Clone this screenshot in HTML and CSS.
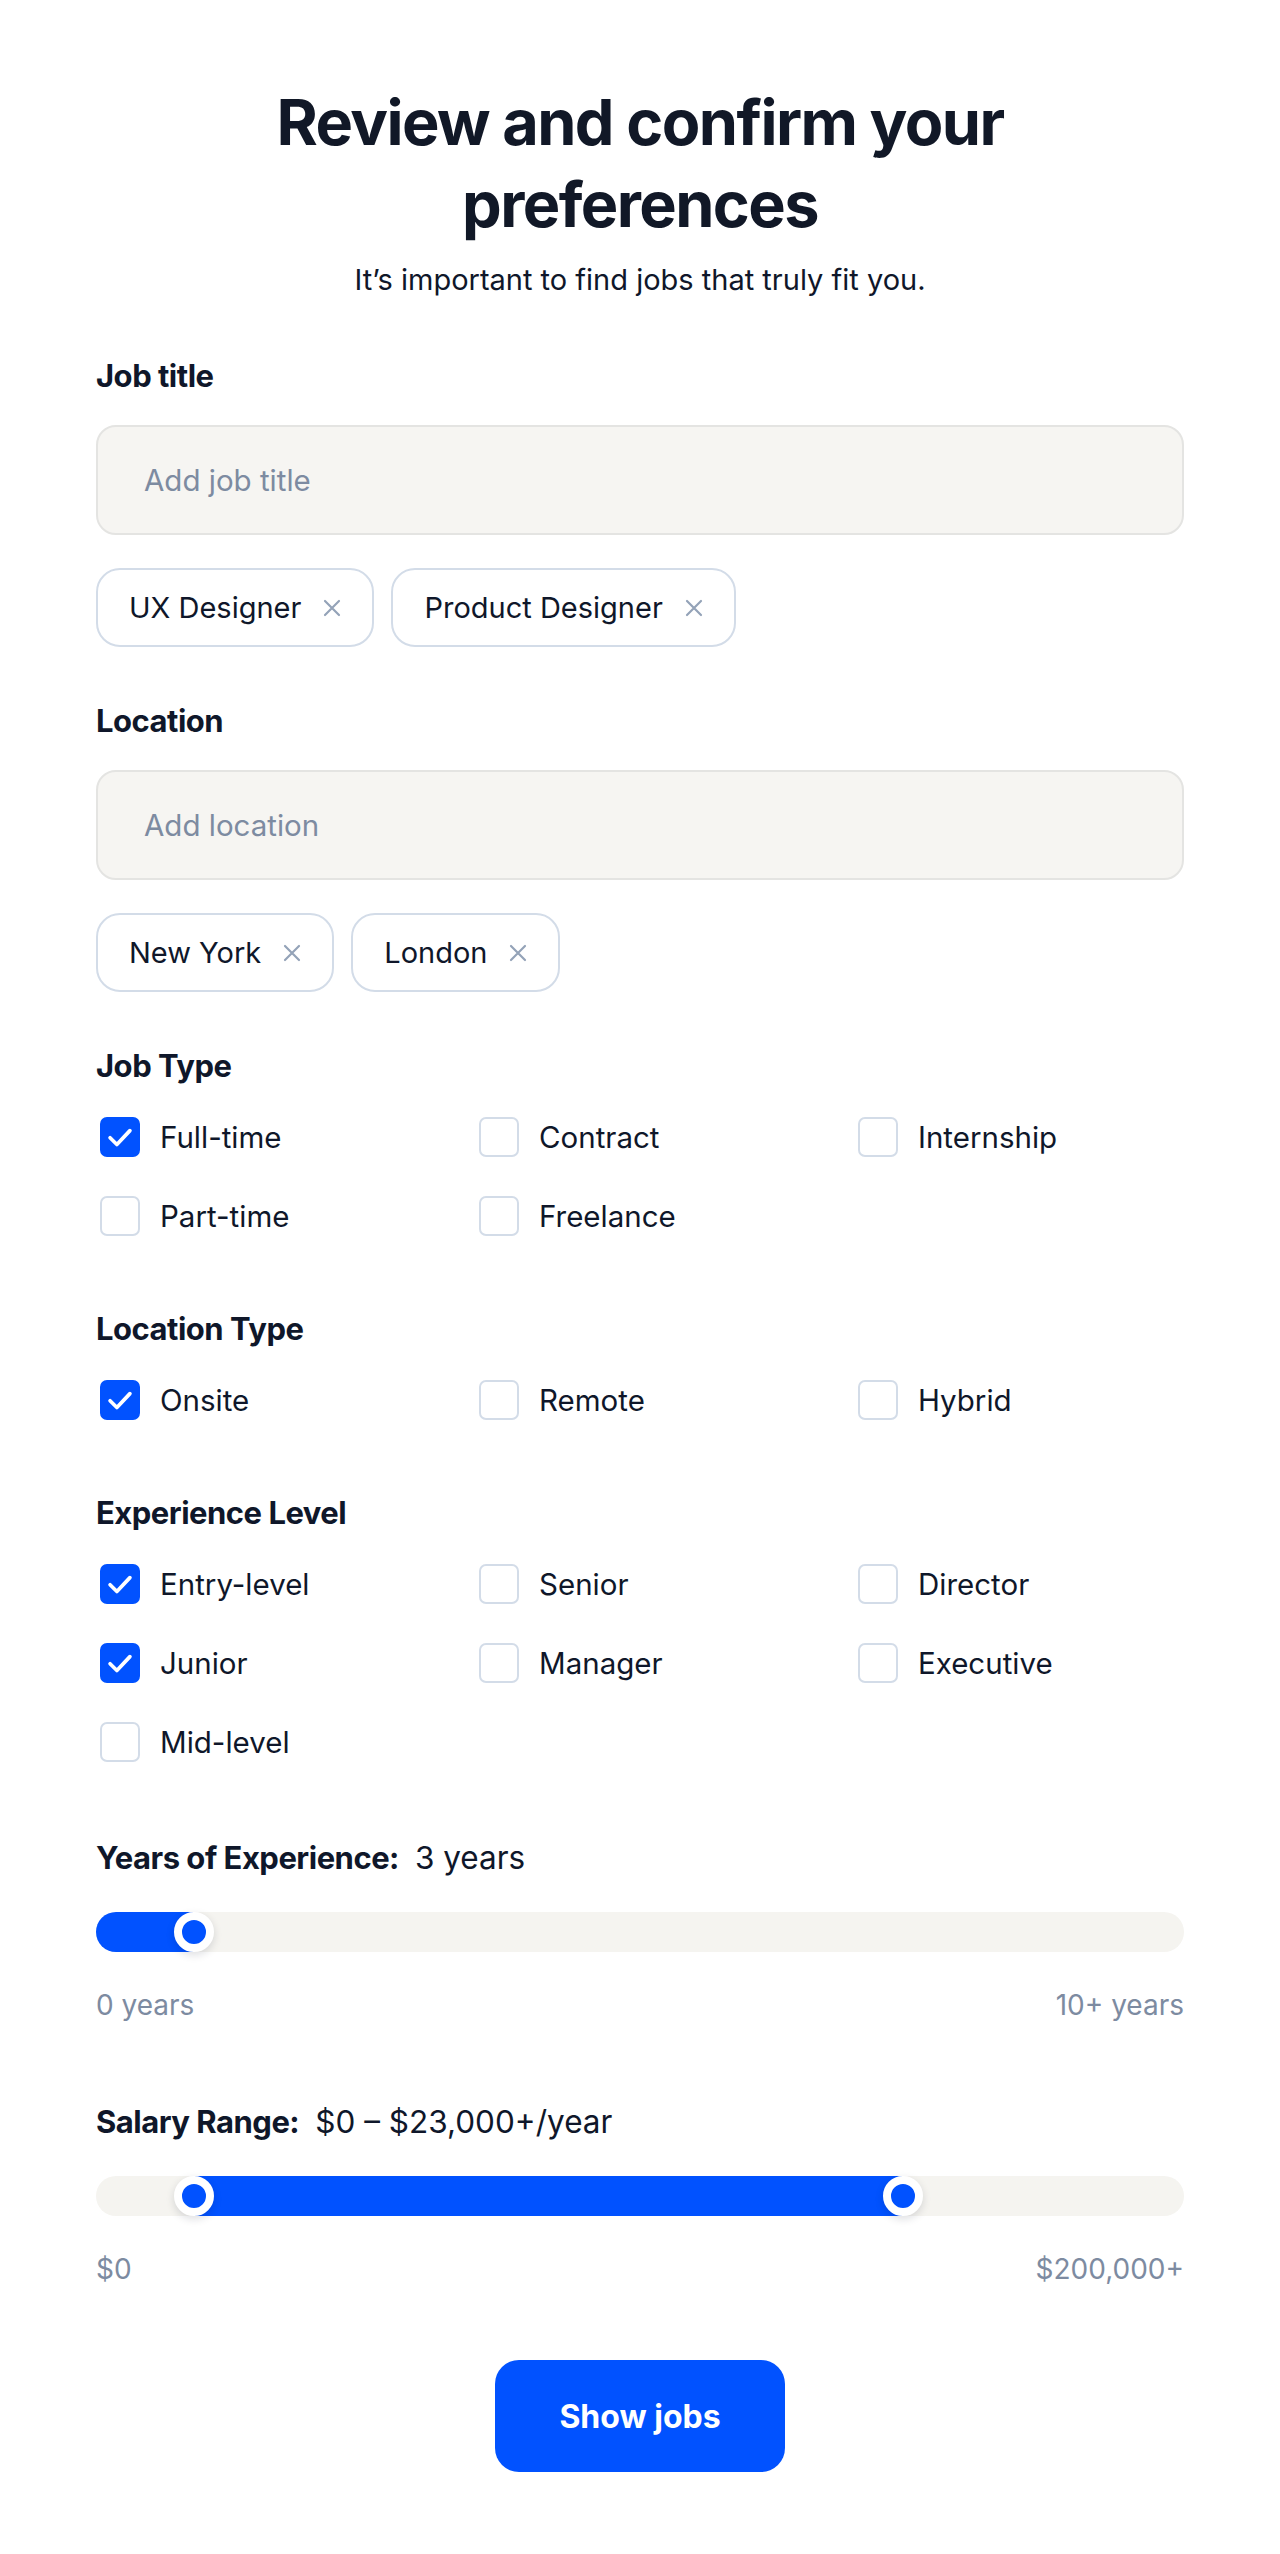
FILE: index.html
```html
<!DOCTYPE html>
<html lang="en">
<head>
<meta charset="utf-8">
<title>Review and confirm your preferences</title>
<link rel="stylesheet" href="styles.css">
</head>
<body>
<main class="page">
  <h1 class="title">Review and confirm your preferences</h1>
  <p class="subtitle">It’s important to find jobs that truly fit you.</p>

  <section class="section section--first">
    <h2 class="label">Job title</h2>
    <div class="input">Add job title</div>
    <div class="chips">
      <span class="chip">UX Designer<svg class="chip-x" viewBox="0 0 20 20"><path d="M3 3L17 17M17 3L3 17"/></svg></span>
      <span class="chip">Product Designer<svg class="chip-x" viewBox="0 0 20 20"><path d="M3 3L17 17M17 3L3 17"/></svg></span>
    </div>
  </section>

  <section class="section section--text">
    <h2 class="label">Location</h2>
    <div class="input">Add location</div>
    <div class="chips">
      <span class="chip">New York<svg class="chip-x" viewBox="0 0 20 20"><path d="M3 3L17 17M17 3L3 17"/></svg></span>
      <span class="chip">London<svg class="chip-x" viewBox="0 0 20 20"><path d="M3 3L17 17M17 3L3 17"/></svg></span>
    </div>
  </section>

  <section class="section section--text">
    <h2 class="label">Job Type</h2>
    <div class="options">
      <div class="option"><span class="box box--on"><svg viewBox="0 0 24 24"><path d="M5 12.5l4.8 4.8L19 7.5"/></svg></span>Full-time</div>
      <div class="option"><span class="box"></span>Contract</div>
      <div class="option"><span class="box"></span>Internship</div>
      <div class="option"><span class="box"></span>Part-time</div>
      <div class="option"><span class="box"></span>Freelance</div>
    </div>
  </section>

  <section class="section section--options">
    <h2 class="label">Location Type</h2>
    <div class="options">
      <div class="option"><span class="box box--on"><svg viewBox="0 0 24 24"><path d="M5 12.5l4.8 4.8L19 7.5"/></svg></span>Onsite</div>
      <div class="option"><span class="box"></span>Remote</div>
      <div class="option"><span class="box"></span>Hybrid</div>
    </div>
  </section>

  <section class="section section--options">
    <h2 class="label">Experience Level</h2>
    <div class="options">
      <div class="option"><span class="box box--on"><svg viewBox="0 0 24 24"><path d="M5 12.5l4.8 4.8L19 7.5"/></svg></span>Entry-level</div>
      <div class="option"><span class="box"></span>Senior</div>
      <div class="option"><span class="box"></span>Director</div>
      <div class="option"><span class="box box--on"><svg viewBox="0 0 24 24"><path d="M5 12.5l4.8 4.8L19 7.5"/></svg></span>Junior</div>
      <div class="option"><span class="box"></span>Manager</div>
      <div class="option"><span class="box"></span>Executive</div>
      <div class="option"><span class="box"></span>Mid-level</div>
    </div>
  </section>

  <section class="section section--years">
    <h2 class="label">Years of Experience:<span class="value">3 years</span></h2>
    <div class="track">
      <div class="fill fill--start" style="left:0;width:98px"></div>
      <span class="thumb" style="left:78px"></span>
    </div>
    <div class="scale"><span>0 years</span><span>10+ years</span></div>
  </section>

  <section class="section section--slider">
    <h2 class="label">Salary Range:<span class="value">$0 – $23,000+/year</span></h2>
    <div class="track">
      <div class="fill" style="left:98px;width:708px"></div>
      <span class="thumb" style="left:78px"></span>
      <span class="thumb" style="left:787px"></span>
    </div>
    <div class="scale"><span>$0</span><span>$200,000+</span></div>
  </section>

  <div class="actions">
    <button class="button" type="button">Show jobs</button>
  </div>
</main>
</body>
</html>
```

FILE: styles.css
```css
* { box-sizing: border-box; }

html, body {
  margin: 0;
  padding: 0;
  background: #ffffff;
}

body {
  font-family: Inter, "Noto Sans", "Liberation Sans", sans-serif;
  color: #0f172a;
}

.page {
  width: 1088px;
  margin: 0 auto;
  padding: 81px 0 82px;
}

.title {
  margin: 0 auto;
  max-width: 820px;
  font-size: 63px;
  line-height: 82px;
  font-weight: 700;
  letter-spacing: -1.6px;
  text-align: center;
  color: #111827;
}

.subtitle {
  margin: 17px 0 0;
  font-size: 29px;
  line-height: 36px;
  text-align: center;
  color: #0f172a;
}

.section--first { margin-top: 60px; }
.section--text { margin-top: 56px; }
.section--options { margin-top: 75px; }
.section--years { margin-top: 78px; }
.section--slider { margin-top: 83px; }

.label {
  margin: 0;
  font-size: 31px;
  line-height: 36px;
  font-weight: 700;
  letter-spacing: -0.5px;
  color: #0f172a;
}

.value {
  margin-left: 16px;
  font-size: 31.5px;
  font-weight: 400;
  letter-spacing: 0;
}

.input {
  margin-top: 31px;
  height: 110px;
  padding: 0 46px;
  display: flex;
  align-items: center;
  background: #f6f5f2;
  border: 2px solid #e4e4e2;
  border-radius: 20px;
  font-size: 29.5px;
  color: #7d8ba1;
}

.chips {
  margin-top: 33px;
  display: flex;
  gap: 17px;
}

.chip {
  height: 79px;
  padding: 0 30px 0 31px;
  display: inline-flex;
  align-items: center;
  gap: 21px;
  border: 2px solid #d3dce8;
  border-radius: 24px;
  font-size: 29px;
  color: #0f172a;
  background: #fff;
}

.chip-x {
  width: 20px;
  height: 20px;
  fill: none;
  stroke: #94a3b8;
  stroke-width: 2.2;
  stroke-linecap: round;
}

.options {
  margin-top: 33px;
  display: grid;
  grid-template-columns: repeat(3, 1fr);
  column-gap: 49px;
  row-gap: 39px;
}

.option {
  height: 40px;
  padding-left: 4px;
  display: flex;
  align-items: center;
  gap: 20px;
  font-size: 29.5px;
  color: #0f172a;
}

.box {
  flex: none;
  width: 40px;
  height: 40px;
  border: 2px solid #d3dce8;
  border-radius: 7px;
  background: #fff;
  display: flex;
  align-items: center;
  justify-content: center;
}

.box--on {
  background: #0152ff;
  border-color: #0152ff;
}

.box svg {
  width: 34px;
  height: 34px;
  fill: none;
  stroke: #fff;
  stroke-width: 2.6;
  stroke-linecap: round;
  stroke-linejoin: round;
}

.track {
  position: relative;
  margin-top: 36px;
  height: 40px;
  border-radius: 20px;
  background: #f5f4f0;
}

.fill {
  position: absolute;
  top: 0;
  height: 40px;
  background: #0152ff;
}

.fill--start {
  border-radius: 20px 0 0 20px;
}

.thumb {
  position: absolute;
  top: 0;
  width: 40px;
  height: 40px;
  border-radius: 50%;
  background: #0152ff;
  border: 8px solid #ffffff;
  box-shadow: 0 3px 8px rgba(15, 23, 42, 0.14);
}

.scale {
  margin-top: 37px;
  display: flex;
  justify-content: space-between;
  font-size: 28px;
  line-height: 32px;
  color: #7d8ba1;
}

.actions {
  margin-top: 75px;
  display: flex;
  justify-content: center;
}

.button {
  width: 290px;
  height: 112px;
  border: none;
  border-radius: 24px;
  background: #0152ff;
  color: #ffffff;
  font-family: Inter, "Noto Sans", "Liberation Sans", sans-serif;
  font-size: 32px;
  font-weight: 700;
  cursor: pointer;
}
```
